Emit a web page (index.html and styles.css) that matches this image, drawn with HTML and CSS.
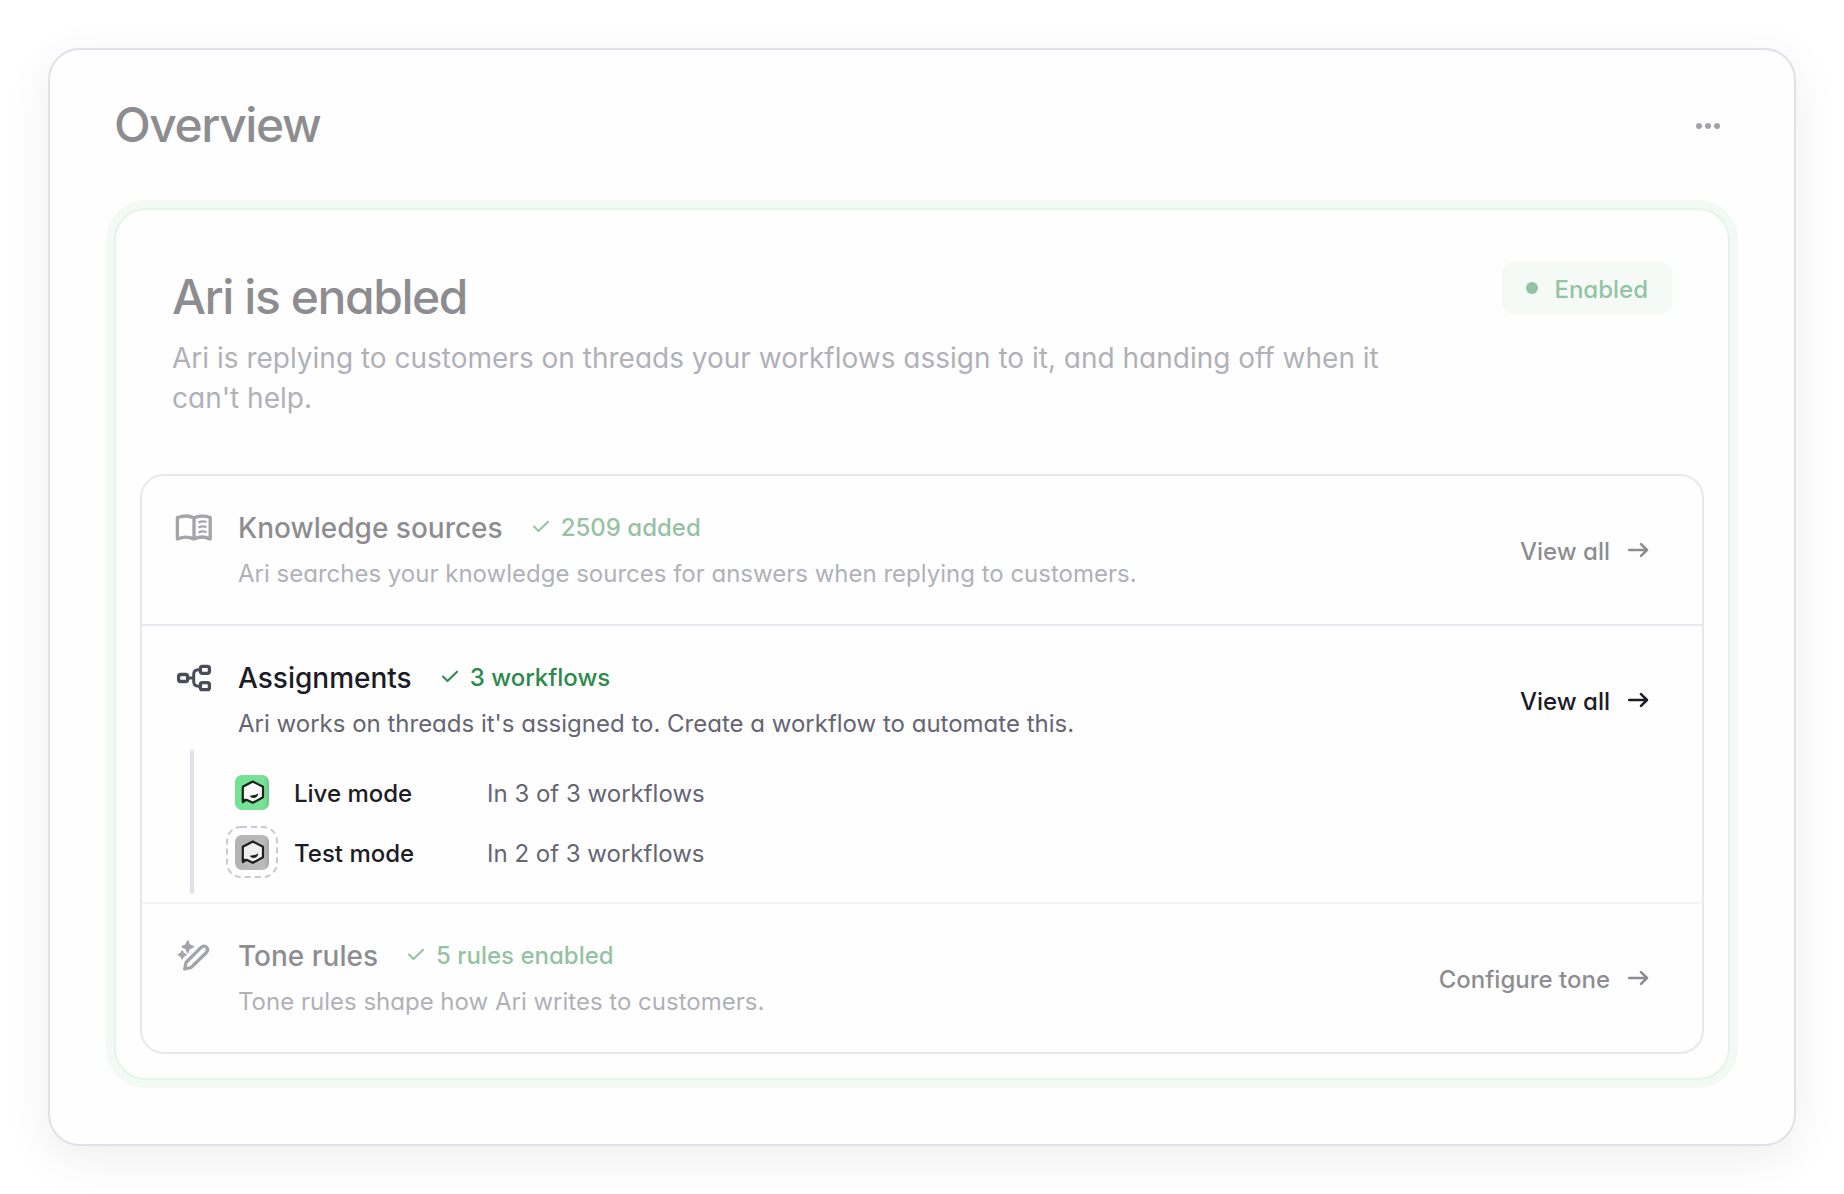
FILE: index.html
```html
<!DOCTYPE html>
<html lang="en">

<head>
    <meta charset="UTF-8">
    <meta name="viewport" content="width=device-width, initial-scale=1.0">
    <title>Overview</title>
    <link rel="stylesheet" href="styles.css">
</head>

<body>
    <main class="panel">
        <header class="panel-header faded">
            <h1>Overview</h1>
            <button class="more-button" type="button" aria-label="More options">
                <svg width="24" height="6" viewBox="0 0 24 6" fill="currentColor">
                    <circle cx="3" cy="3" r="3" />
                    <circle cx="12" cy="3" r="3" />
                    <circle cx="21" cy="3" r="3" />
                </svg>
            </button>
        </header>

        <section class="agent">
            <div class="agent-header faded">
                <div class="agent-intro">
                    <h2>Ari is enabled</h2>
                    <p>Ari is replying to customers on threads your workflows assign to it, and handing off when it can't help.</p>
                </div>
                <span class="badge"><span class="dot"></span><span class="label">Enabled</span></span>
            </div>

            <div class="rows">
                <article class="row">
                    <div class="row-main faded">
                        <svg class="row-icon" viewBox="0 0 40 40" fill="none" stroke="currentColor" stroke-width="3.3" stroke-linejoin="round">
                            <path d="M20 10C16 7.700 9 7.700 3.400 9.500V31C9 28.500 15 28.500 20 31C25 28.500 31 28.500 36.200 31V9.500C31 7.700 24 7.700 20 10ZV31" />
                            <path d="M24.500 14.500Q28.500 12.500 32.500 14M24.500 19.500Q28.500 17.500 32.500 19M24.500 24.500Q28.500 22.500 32.500 24" stroke-width="2.4" />
                        </svg>
                        <div class="row-text">
                            <div class="row-title">
                                <h3>Knowledge sources</h3>
                                <span class="status">
                                    <svg class="check" viewBox="0 0 16 16" fill="none" stroke="currentColor" stroke-width="2" stroke-linecap="round" stroke-linejoin="round"><path d="M1 6.500L5.500 11L15 1.800" /></svg>
                                    2509 added
                                </span>
                            </div>
                            <p>Ari searches your knowledge sources for answers when replying to customers.</p>
                        </div>
                        <a class="row-link" href="#">
                            <span class="label">View all</span>
                            <svg class="arrow" viewBox="0 0 22 16" fill="none" stroke="currentColor" stroke-width="2.5" stroke-linecap="round" stroke-linejoin="round"><path d="M1.200 8H19M13 2.200L19 8L13 13.800" /></svg>
                        </a>
                    </div>
                </article>

                <article class="row">
                    <div class="row-main">
                        <svg class="row-icon" viewBox="0 0 40 40" fill="none" stroke="currentColor" stroke-width="3.3">
                            <rect x="4.600" y="16.500" width="9" height="7" rx="2" />
                            <rect x="26.400" y="8.300" width="9" height="7" rx="2" />
                            <rect x="26.400" y="24.700" width="9" height="7" rx="2" />
                            <path d="M13.600 20H20M26.400 11.800H24.500Q19.700 11.800 19.700 16.500V23.500Q19.700 28.200 24.500 28.200H26.400" stroke-width="3" />
                        </svg>
                        <div class="row-text">
                            <div class="row-title">
                                <h3>Assignments</h3>
                                <span class="status">
                                    <svg class="check" viewBox="0 0 16 16" fill="none" stroke="currentColor" stroke-width="2" stroke-linecap="round" stroke-linejoin="round"><path d="M1 6.500L5.500 11L15 1.800" /></svg>
                                    3 workflows
                                </span>
                            </div>
                            <p>Ari works on threads it's assigned to. Create a workflow to automate this.</p>
                        </div>
                        <a class="row-link" href="#">
                            <span class="label">View all</span>
                            <svg class="arrow" viewBox="0 0 22 16" fill="none" stroke="currentColor" stroke-width="2.5" stroke-linecap="round" stroke-linejoin="round"><path d="M1.200 8H19M13 2.200L19 8L13 13.800" /></svg>
                        </a>
                    </div>
                    <div class="modes">
                        <div class="rail"></div>
                        <ul>
                            <li>
                                <svg class="avatar" viewBox="0 0 52 52">
                                    <defs>
                                        <linearGradient id="live" x1="0" y1="0" x2="1" y2="0">
                                            <stop offset="0" stop-color="#70e492" />
                                            <stop offset="0.85" stop-color="#7ae099" />
                                            <stop offset="1" stop-color="#6ac987" />
                                        </linearGradient>
                                    </defs>
                                    <rect x="9" y="9" width="34" height="35" rx="7" fill="url(#live)" />
                                    <path d="M16.800 36V20.800L26.800 15.500L37 20.800V31.200L26.800 36.800L20.500 33.800Z" fill="#fafafa" stroke="#16241b" stroke-width="2.200" stroke-linejoin="round" />
                                    <path d="M15.700 32L21 33.500L16.500 37.500Z" fill="#16241b" />
                                    <path d="M23.800 29.800Q29 29.600 32.300 27.300Q32 31.600 27.500 32Q24.800 32 23.800 29.800Z" fill="#16241b" />
                                </svg>
                                <strong>Live mode</strong>
                                <span class="label">In 3 of 3 workflows</span>
                            </li>
                            <li>
                                <svg class="avatar" viewBox="0 0 52 52">
                                    <defs>
                                        <linearGradient id="test" x1="0" y1="0" x2="1" y2="0">
                                            <stop offset="0" stop-color="#b4b4b4" />
                                            <stop offset="0.85" stop-color="#bababa" />
                                            <stop offset="1" stop-color="#a4a4a4" />
                                        </linearGradient>
                                    </defs>
                                    <rect x="1" y="1" width="50" height="50" rx="14" fill="none" stroke="#c9c9d6" stroke-width="2" stroke-dasharray="6 4" />
                                    <rect x="9" y="9" width="34" height="35" rx="7" fill="url(#test)" />
                                    <path d="M16.800 36V20.800L26.800 15.500L37 20.800V31.200L26.800 36.800L20.500 33.800Z" fill="#f0f0f0" stroke="#1e1e1e" stroke-width="2.200" stroke-linejoin="round" />
                                    <path d="M15.700 32L21 33.500L16.500 37.500Z" fill="#1e1e1e" />
                                    <path d="M23.800 29.800Q29 29.600 32.300 27.300Q32 31.600 27.500 32Q24.800 32 23.800 29.800Z" fill="#1e1e1e" />
                                </svg>
                                <strong>Test mode</strong>
                                <span class="label">In 2 of 3 workflows</span>
                            </li>
                        </ul>
                    </div>
                </article>

                <article class="row">
                    <div class="row-main faded">
                        <svg class="row-icon" viewBox="0 0 40 40" fill="none" stroke="currentColor" stroke-width="3.3" stroke-linejoin="round">
                            <path d="M10.700 33L12 26.500L26.800 11.700Q30 8.800 32.500 11.200Q35 14 32 17L17 31.500Z" />
                            <path d="M13.700 5L15.400 9L19.300 10.700L15.400 12.400L13.700 16.400L12 12.400L8.200 10.700L12 9ZM8.200 15L9.400 17.600L12 18.800L9.400 20L8.200 22.600L7 20L4.400 18.800L7 17.600Z" fill="currentColor" stroke-width="1.6" />
                        </svg>
                        <div class="row-text">
                            <div class="row-title">
                                <h3>Tone rules</h3>
                                <span class="status">
                                    <svg class="check" viewBox="0 0 16 16" fill="none" stroke="currentColor" stroke-width="2" stroke-linecap="round" stroke-linejoin="round"><path d="M1 6.500L5.500 11L15 1.800" /></svg>
                                    5 rules enabled
                                </span>
                            </div>
                            <p>Tone rules shape how Ari writes to customers.</p>
                        </div>
                        <a class="row-link" href="#">
                            <span class="label">Configure tone</span>
                            <svg class="arrow" viewBox="0 0 22 16" fill="none" stroke="currentColor" stroke-width="2.5" stroke-linecap="round" stroke-linejoin="round"><path d="M1.200 8H19M13 2.200L19 8L13 13.800" /></svg>
                        </a>
                    </div>
                </article>
            </div>
        </section>
    </main>
</body>

</html>
```
FILE: styles.css
```css
* {
    box-sizing: border-box;
}

body {
    margin: 0;
    padding: 48px;
    background: #fff;
    color: #1c1c26;
    font-family: Inter, sans-serif;
    font-feature-settings: "cv11";
}

h1, h2, h3, p, ul {
    margin: 0;
    padding: 0;
}

h1, h2 {
    font-size: 48px;
    font-weight: 500;
    line-height: 54px;
    letter-spacing: -0.03em;
}

/* Everything except the highlighted row */
.faded {
    opacity: 0.5;
}

.panel {
    padding: 48px 64px 64px;
    border: 2px solid #e0e0e8;
    border-radius: 32px;
    background: #fefefe;
    box-shadow: 0 12px 48px rgba(0, 0, 0, 0.07);
}

.panel-header {
    display: flex;
    justify-content: space-between;
    align-items: center;
    margin-bottom: 56px;
}

.more-button {
    display: flex;
    padding: 12px 10px 10px;
    border: 0;
    background: none;
    color: #4b4b59;
}

.agent {
    padding: 24px;
    border: 2px solid #e3f5e8;
    border-radius: 32px;
    box-shadow: 0 0 0 8px #f3faf6;
}

.agent-header {
    display: flex;
    justify-content: space-between;
    align-items: flex-start;
    padding: 28px 32px 56px;
}

.agent-intro {
    max-width: 1232px;
    padding-top: 8px;
}

.agent-intro p {
    margin-top: 14px;
    color: #656573;
    font-size: 28px;
    line-height: 40px;
}

.badge {
    display: flex;
    align-items: center;
    gap: 16px;
    padding: 6px 24px;
    border-radius: 12px;
    background: #edf7f0;
    color: #2b8a4b;
    font-size: 24px;
    font-weight: 500;
    line-height: 36px;
}

.label {
    padding-top: 4px;
}

.dot {
    width: 12px;
    height: 12px;
    border-radius: 50%;
    background: currentColor;
}

.rows {
    border: 2px solid #e7e7ee;
    border-radius: 24px;
}

.row + .row {
    border-top: 2px solid #e7e7ee;
}

.row + .row:last-child {
    border-color: #f2f2f7;
}

.row-main {
    display: flex;
    align-items: center;
    gap: 24px;
    padding: 32px 52px 32px 32px;
}

.row-icon {
    flex: none;
    align-self: flex-start;
    width: 40px;
    height: 40px;
    color: #4b4b59;
}

.row-text {
    flex: 1;
}

.row-title {
    display: flex;
    align-items: center;
    gap: 30px;
}

h3 {
    font-size: 28px;
    font-weight: 500;
    line-height: 40px;
}

.row-text p {
    margin-top: 8px;
    color: #656573;
    font-size: 24px;
    line-height: 36px;
}

.status, .row-link {
    display: flex;
    align-items: center;
    font-size: 24px;
    font-weight: 500;
    line-height: 36px;
}

.status {
    gap: 12px;
    color: #2b8a4b;
}

.check {
    width: 16px;
    height: 16px;
}

.row-link {
    gap: 18px;
    color: inherit;
    text-decoration: none;
}

.arrow {
    width: 22px;
    height: 16px;
}

.modes {
    display: flex;
    gap: 32px;
    margin: -24px 48px 8px;
    font-size: 24px;
    line-height: 36px;
}

.rail {
    width: 4px;
    border-radius: 2px;
    background: #e0e0e8;
}

.modes ul {
    padding: 12px 0;
    list-style: none;
}

.modes li {
    display: flex;
    align-items: center;
    height: 60px;
}

.modes strong {
    width: 193px;
    margin-left: 16px;
    padding-top: 4px;
    font-weight: 500;
}

.modes .label {
    color: #656573;
}

.avatar {
    width: 52px;
    height: 52px;
}
```
